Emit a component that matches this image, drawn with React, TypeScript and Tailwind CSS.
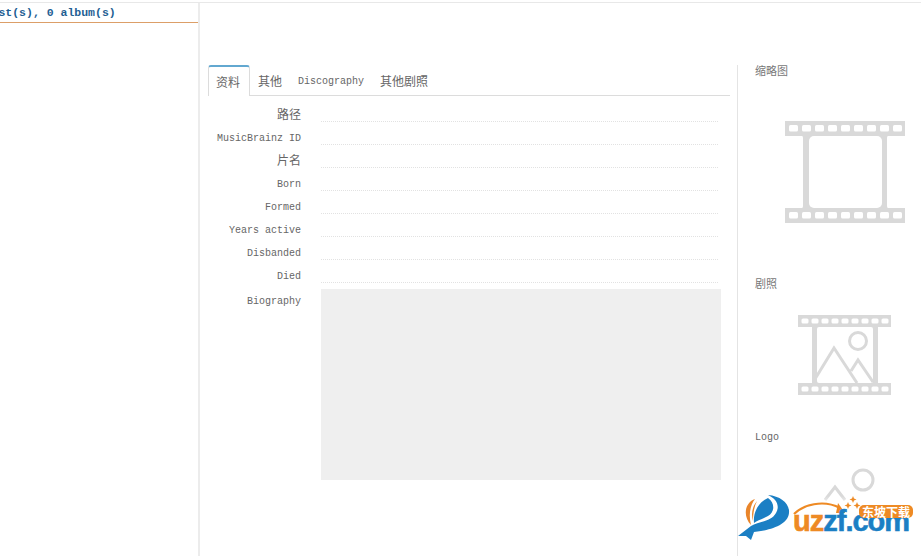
import React from 'react'

const mono = "font-['Liberation_Mono','Noto_Sans_CJK_SC',monospace]"

const fields = ['路径', 'MusicBrainz ID', '片名', 'Born', 'Formed', 'Years active', 'Disbanded', 'Died']
const tabs = ['其他', 'Discography', '其他剧照']

function isCjk(s: string) {
  return /[\u4e00-\u9fff]/.test(s)
}

function Holes({ x, y, w, h, step, n }: { x: number; y: number; w: number; h: number; step: number; n: number }) {
  return (
    <>
      {Array.from({ length: n }).map((_, i) => (
        <rect key={i} x={x + i * step} y={y} width={w} height={h} rx={1.5} fill="#fff" />
      ))}
    </>
  )
}

function ThumbIcon() {
  return (
    <svg width="120" height="102" viewBox="0 0 120 102" className="ml-[47px] mt-[45px] block">
      <path
        fill="#d9d9d9"
        d="M0 0H120V15H103Q102 15 102 17V85Q102 87 103 87H120V102H0V87H17Q18 87 18 85V17Q18 15 17 15H0Z"
      />
      <rect x="24" y="15" width="73" height="72" rx="5" fill="#fff" />
      <Holes x={4} y={4} w={9} h={6.5} step={13} n={9} />
      <Holes x={4} y={91} w={9} h={6.5} step={13} n={9} />
    </svg>
  )
}

function FanartIcon() {
  return (
    <svg width="93" height="80" viewBox="0 0 93 80" className="ml-[60px] mt-[26px] block">
      <path fill="#d9d9d9" d="M0 0H93V12H80V68H93V80H0V68H14V12H0Z" />
      <rect x="19" y="12" width="56" height="56" rx="2" fill="#fff" />
      <Holes x={3.5} y={3.5} w={7} h={5} step={10} n={9} />
      <Holes x={3.5} y={71.5} w={7} h={5} step={10} n={9} />
      <circle cx="60" cy="26" r="8.5" fill="none" stroke="#d9d9d9" strokeWidth="3" />
      <path fill="none" stroke="#d9d9d9" strokeWidth="3" d="M17 64L36 33L59 68M53 56L60 45L75 67" />
    </svg>
  )
}

// site watermark that sits over the bottom right corner
function Watermark() {
  return (
    <div className="absolute left-[737px] top-[490px] h-[60px] w-[180px]">
      <div className="absolute left-[1px] top-[6px] h-[46px] w-[179px] bg-gradient-to-b from-white/0 to-white to-[25%]" />
      <svg width="180" height="60" viewBox="0 0 180 60" className="absolute left-0 top-0">
        <path
          fill="#1b7fc4"
          d="M1 46L14 36C22 31 34 32 39 23C43 16 40 9 31 5C44 6 53 14 52 23C51 34 36 39 24 41L17 42L14 50L9 46Z"
        />
        <path fill="#1b7fc4" d="M31 8C38 13 38 22 31 26C26 29 21 30 17 33C16 24 20 13 31 8Z" />
        <path fill="#e9852a" d="M18 9C7 13 6 27 14 35C12 27 12 17 18 9Z" />
        <path fill="#e9852a" d="M20 11C15 17 14 24 16 31C16 24 17 17 20 11Z" />
        <path fill="none" stroke="#ee8a24" strokeWidth="2.2" d="M57 24C66 15 86 9 103 18" />
        <path fill="#ee8a24" d="M108 23L101 13L99 23Z" />
        <path
          fill="#ee8a24"
          d="M111 12l1 2.500 2.500 1-2.500 1-1 2.500-1-2.500-2.500-1 2.500-1zM116 6l1 2.500 2.500 1-2.500 1-1 2.500-1-2.500-2.500-1 2.500-1zM120 12l1 2.500 2.500 1-2.500 1-1 2.500-1-2.500-2.500-1 2.500-1z"
        />
      </svg>
      <div className="absolute left-[56px] top-[23px] whitespace-nowrap font-['Liberation_Sans',sans-serif] text-[29px] font-bold leading-[16px] tracking-[-1px] [-webkit-text-stroke:0.6px]">
        <span className="text-[#ee8a24]">uz</span>
        <span className="text-[#1b7fc4]">zf.com</span>
      </div>
      <div className="absolute left-[122px] top-[15px] flex h-[13px] w-[54px] items-center justify-center rounded-[5px] bg-[#ee8a24] font-['Noto_Sans_CJK_SC',sans-serif] text-[12px] font-bold leading-none text-white">
        东坡下载
      </div>
    </div>
  )
}

export default function App() {
  return (
    <div className={`relative h-[556px] w-[921px] overflow-hidden bg-white pt-[2px] ${mono}`}>
      <div className="flex h-full border-t border-[#e8e8e8]">
        {/* left list */}
        <div className="w-[200px] shrink-0 overflow-hidden border-r-2 border-[#ececec]">
          <div className="h-[20px] border-b border-[#dc9f68] pt-[2px] text-[11.5px] font-bold leading-[15px] whitespace-nowrap text-[#1f5f94]">
            <span className="ml-[-43px]">0 artist(s), 0 album(s)</span>
          </div>
        </div>

        {/* form */}
        <div className="w-[537px] shrink-0 pl-[8px] pr-[7px] pt-[62px]">
          <div className="flex h-[31px] border-b border-[#dcdcdc] text-[10px] text-[#666]">
            <div className="h-[31px] rounded-t-[3px] border-x border-t-2 border-x-[#dcdcdc] border-t-[#62a8d0] bg-white pl-[7px] pr-[9px] pt-[6px] font-['Noto_Sans_CJK_SC',sans-serif] text-[12px] leading-[18px]">
              资料
            </div>
            {tabs.map((t) => (
              <div
                key={t}
                className={`px-[8px] leading-[18px] ${isCjk(t) ? "pt-[7px] font-['Noto_Sans_CJK_SC',sans-serif] text-[12px]" : 'pt-[8px] text-[10px]'}`}
              >
                {t}
              </div>
            ))}
          </div>

          <div className="pt-[3px]">
            {fields.map((f) => (
              <div key={f} className="flex h-[23px] items-start">
                <div
                  className={`w-[93px] text-right leading-[16px] text-[#666] ${isCjk(f) ? "pt-[7px] font-['Noto_Sans_CJK_SC',sans-serif] text-[12px]" : 'pt-[9px] text-[10px]'}`}
                >
                  {f}
                </div>
                <div className="ml-[20px] h-[23px] w-[397px] border-b border-dotted border-[#e2e2e2]" />
              </div>
            ))}
            <div className="mt-[6px] flex items-start">
              <div className="w-[93px] pt-[5px] text-right text-[10px] leading-[16px] text-[#666]">Biography</div>
              <div className="ml-[20px] h-[191px] w-[400px] bg-[#efefef]" />
            </div>
          </div>
        </div>

        {/* images */}
        <div className="mt-[62px] flex-1 border-l border-[#e4e4e4]">
          <div className="ml-[17px] mt-[-1px] font-['Noto_Sans_CJK_SC',sans-serif] text-[11px] leading-[12px] text-[#777]">缩略图</div>
          <ThumbIcon />
          <div className="ml-[17px] mt-[54px] font-['Noto_Sans_CJK_SC',sans-serif] text-[11px] leading-[12px] text-[#777]">剧照</div>
          <FanartIcon />
          <div className="ml-[17px] mt-[37px] text-[10px] leading-[12px] text-[#666]">Logo</div>
          <svg width="60" height="50" viewBox="0 0 60 50" className="ml-[81px] mt-[22px] block">
            <circle cx="44" cy="14" r="10" fill="none" stroke="#d9d9d9" strokeWidth="3" />
            <path d="M6 34L16 21L26 34" fill="none" stroke="#d9d9d9" strokeWidth="3" />
          </svg>
        </div>
      </div>
      <Watermark />
    </div>
  )
}
